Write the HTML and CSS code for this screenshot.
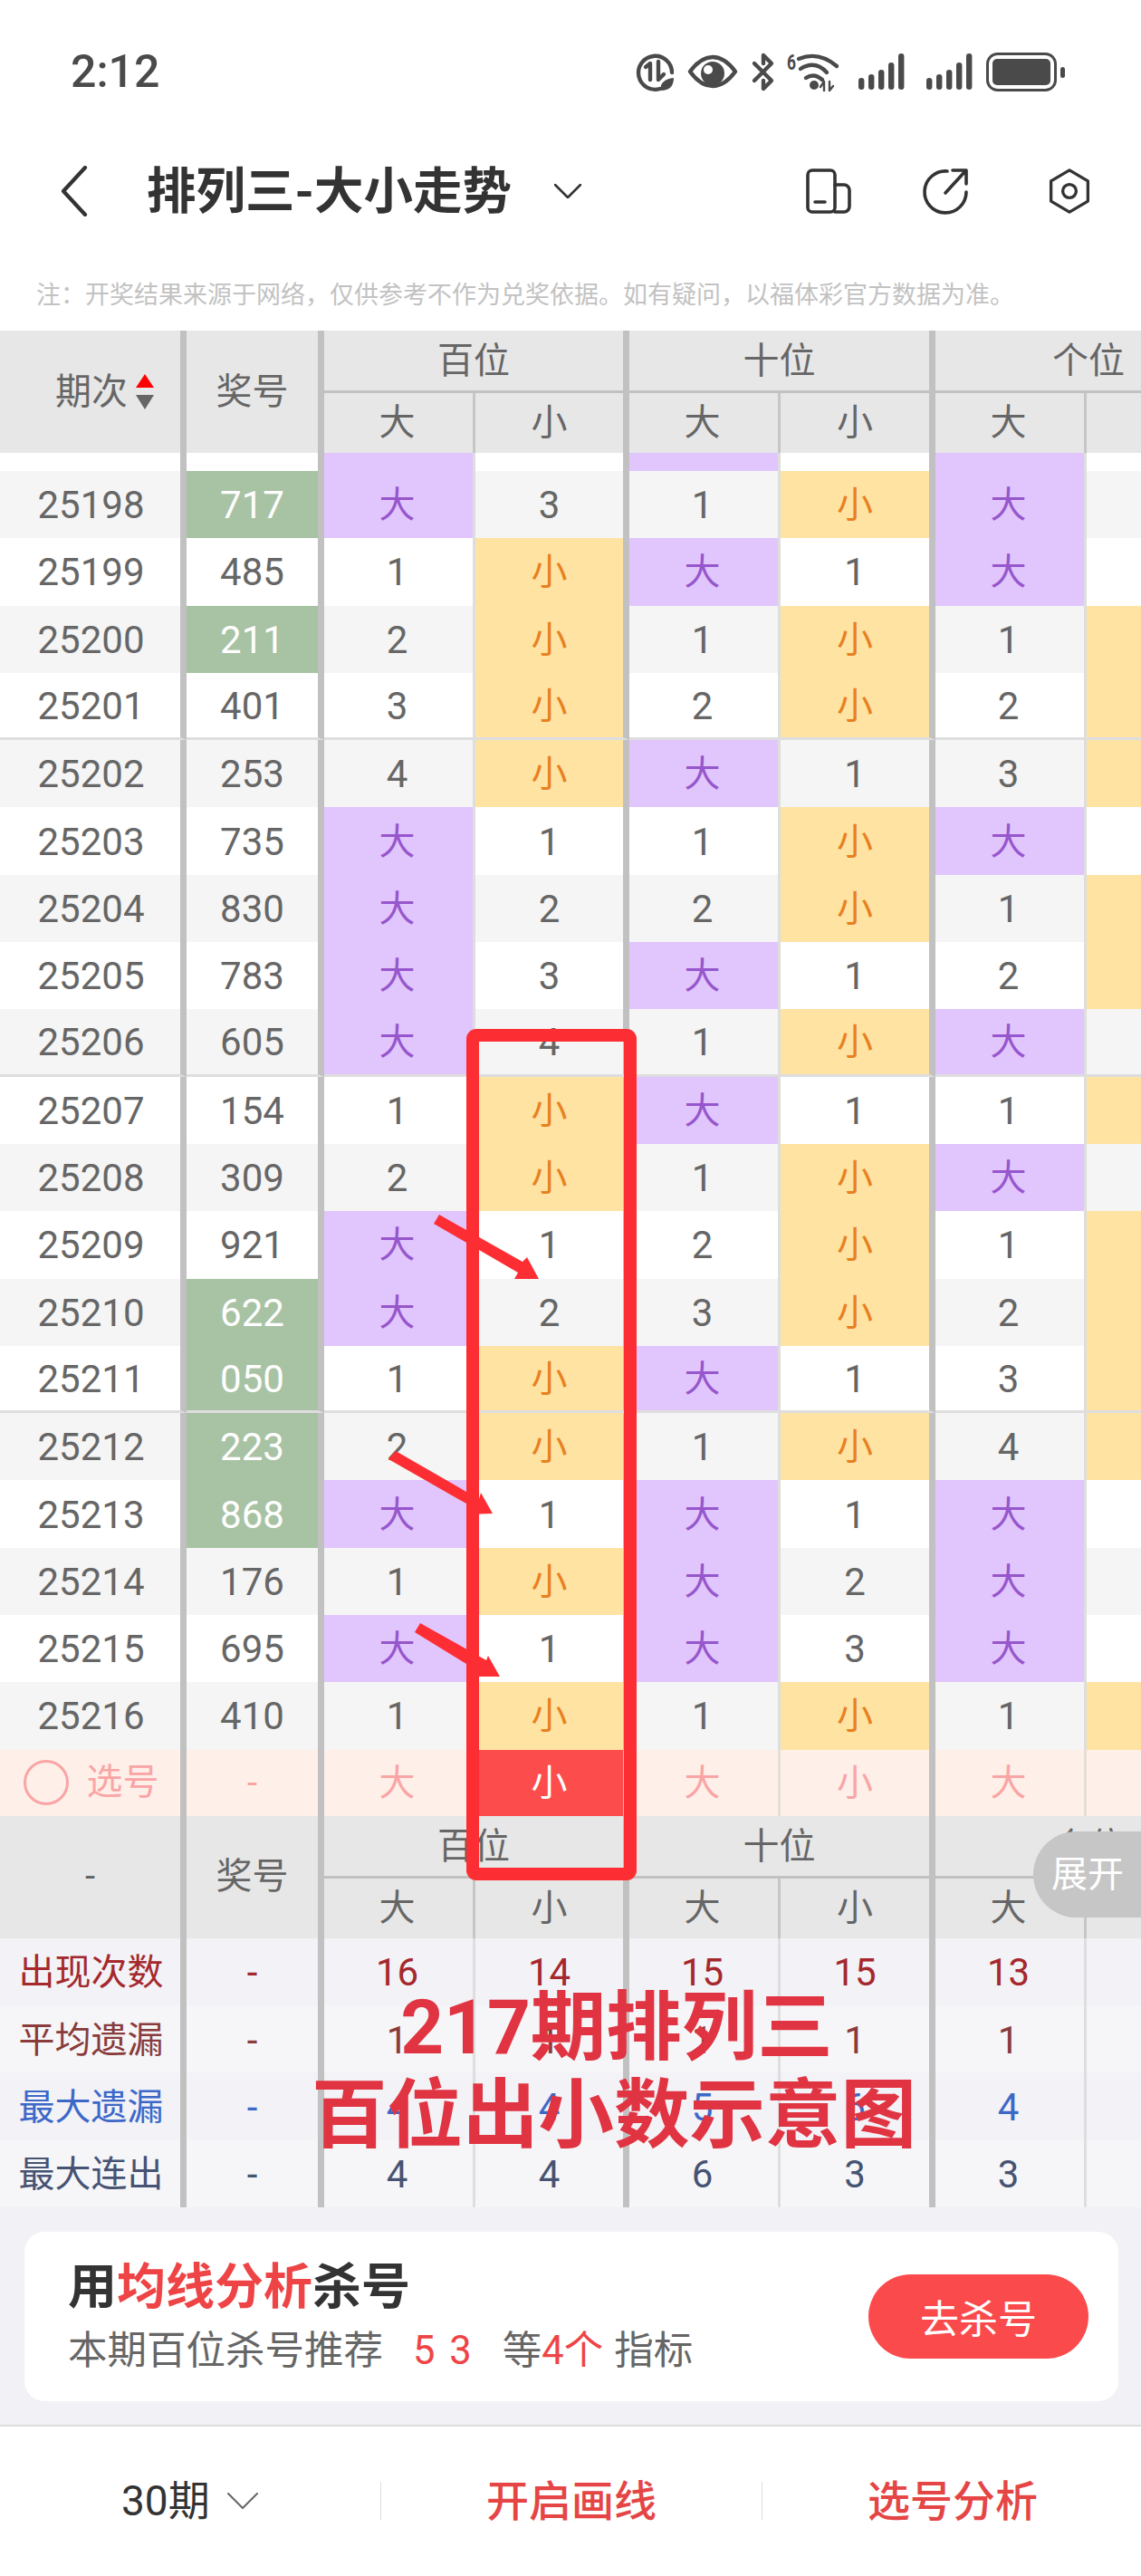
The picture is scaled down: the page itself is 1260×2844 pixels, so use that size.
FILE: index.html
```html
<!DOCTYPE html>
<html lang="zh">
<head>
<meta charset="utf-8">
<title>排列三-大小走势</title>
<link rel="stylesheet" href="styles.css">
</head>
<body>
<div class="page">
  <div class="status">
    <span class="time">2:12</span>
    <div class="status-icons">
      <svg class="i-data" viewBox="0 0 41 41"><path class="s4" d="M26 39A18.5 18.5 0 1 1 39 21"/><path class="s4" d="M10 15l5-4v18M24 9v20l6-6"/><path class="fill" d="M27 41c-2-8 4-13 14-14 0 9-5 14-14 14z"/></svg>
      <svg class="i-eye" viewBox="0 0 54 36"><path class="s4" d="M2 18C10 7 18 2 27 2s17 5 25 16c-8 11-16 16-25 16S10 29 2 18z"/><circle class="fill" cx="27" cy="20" r="13"/><circle class="hole" cx="22" cy="16" r="5"/></svg>
      <svg class="i-bt" viewBox="0 0 25 41"><path class="s4" d="M3 11l19 19-9 9v-9M13 11V2l9 9L3 30"/></svg>
      <svg class="i-wifi" viewBox="0 0 57 41"><text class="six" x="0" y="18" textLength="10" lengthAdjust="spacingAndGlyphs">6</text><path class="s4" d="M13 6Q35-3 55 14"/><path class="s4" d="M15 17Q31 7 44 21"/><path class="s4" d="M21 27Q30 21 39 29"/><circle class="fill" cx="30" cy="35" r="5"/><path class="s2" d="M41 41V31l-4 6M47 31v10l4-5"/></svg>
      <svg class="i-sig" viewBox="0 0 51 41"><rect class="fill" x="0" y="27" width="6.4" height="13" rx="3.2"/><rect class="fill" x="11" y="23" width="6.4" height="17" rx="3.2"/><rect class="fill" x="22" y="18" width="6.4" height="22" rx="3.2"/><rect class="fill" x="33" y="10" width="6.4" height="30" rx="3.2"/><rect class="fill" x="44" y="0" width="6.4" height="40" rx="3.2"/></svg>
      <svg class="i-sig2" viewBox="0 0 51 41"><rect class="fill" x="0" y="27" width="6.4" height="13" rx="3.2"/><rect class="fill" x="11" y="23" width="6.4" height="17" rx="3.2"/><rect class="fill" x="22" y="18" width="6.4" height="22" rx="3.2"/><rect class="fill" x="33" y="10" width="6.4" height="30" rx="3.2"/><rect class="fill" x="44" y="0" width="6.4" height="40" rx="3.2"/></svg>
      <svg class="i-bat" viewBox="0 0 87 43"><rect class="s3" x="1.5" y="1.5" width="75" height="40" rx="11"/><rect class="fill" x="7" y="7" width="64" height="29" rx="5"/><rect class="fill" x="82" y="16" width="5" height="12" rx="2.5"/></svg>
    </div>
  </div>

  <div class="nav">
    <svg class="back" viewBox="0 0 30 56"><path d="M27 2L3 28l24 26"/></svg>
    <h1 class="title">排列三-大小走势</h1>
    <svg class="caret" viewBox="0 0 30 16"><path d="M1 1l14 14L29 1"/></svg>
    <div class="nav-icons">
      <svg viewBox="0 0 50 50"><rect x="2" y="2" width="30" height="46" rx="5"/><path d="M32 18h10a6 6 0 0 1 6 6v18a6 6 0 0 1-6 6H32M10 37h11"/></svg>
      <svg viewBox="0 0 50 50"><path d="M27 3A23 23 0 1 0 48 26M25 27L47 3M33 2h15v15"/></svg>
      <svg viewBox="0 0 50 54"><path d="M25 2l22 13v24L25 52 3 39V15z"/><circle cx="25" cy="27" r="8"/></svg>
    </div>
  </div>

  <p class="note">注：开奖结果来源于网络，仅供参考不作为兑奖依据。如有疑问，以福体彩官方数据为准。</p>

  <div class="table">
    <div class="thead">
      <div class="h span2 thick sortable"><span>期次</span><span class="sort"><i class="up"></i><i class="down"></i></span></div>
      <div class="h span2 thick">奖号</div>
      <div class="h grp thick">百位</div>
      <div class="h grp thick">十位</div>
      <div class="h grp">个位</div>
      <div class="h thin">大</div><div class="h thick">小</div>
      <div class="h thin">大</div><div class="h thick">小</div>
      <div class="h thin">大</div><div class="h"></div>
    </div>

    <div class="row stub"><div class="c thick"></div><div class="c thick"></div><div class="c thin d"></div><div class="c thick"></div><div class="c thin d"></div><div class="c thick"></div><div class="c thin d"></div><div class="c"></div></div>

    <div class="row alt"><div class="c thick">25198</div><div class="c thick g">717</div><div class="c thin d">大</div><div class="c thick">3</div><div class="c thin">1</div><div class="c thick x">小</div><div class="c thin d">大</div><div class="c"></div></div>
    <div class="row"><div class="c thick">25199</div><div class="c thick">485</div><div class="c thin">1</div><div class="c thick x">小</div><div class="c thin d">大</div><div class="c thick">1</div><div class="c thin d">大</div><div class="c"></div></div>
    <div class="row alt"><div class="c thick">25200</div><div class="c thick g">211</div><div class="c thin">2</div><div class="c thick x">小</div><div class="c thin">1</div><div class="c thick x">小</div><div class="c thin">1</div><div class="c x"></div></div>
    <div class="row sep"><div class="c thick">25201</div><div class="c thick">401</div><div class="c thin">3</div><div class="c thick x">小</div><div class="c thin">2</div><div class="c thick x">小</div><div class="c thin">2</div><div class="c x"></div></div>
    <div class="row alt"><div class="c thick">25202</div><div class="c thick">253</div><div class="c thin">4</div><div class="c thick x">小</div><div class="c thin d">大</div><div class="c thick">1</div><div class="c thin">3</div><div class="c x"></div></div>
    <div class="row"><div class="c thick">25203</div><div class="c thick">735</div><div class="c thin d">大</div><div class="c thick">1</div><div class="c thin">1</div><div class="c thick x">小</div><div class="c thin d">大</div><div class="c"></div></div>
    <div class="row alt"><div class="c thick">25204</div><div class="c thick">830</div><div class="c thin d">大</div><div class="c thick">2</div><div class="c thin">2</div><div class="c thick x">小</div><div class="c thin">1</div><div class="c x"></div></div>
    <div class="row"><div class="c thick">25205</div><div class="c thick">783</div><div class="c thin d">大</div><div class="c thick">3</div><div class="c thin d">大</div><div class="c thick">1</div><div class="c thin">2</div><div class="c x"></div></div>
    <div class="row alt sep"><div class="c thick">25206</div><div class="c thick">605</div><div class="c thin d">大</div><div class="c thick">4</div><div class="c thin">1</div><div class="c thick x">小</div><div class="c thin d">大</div><div class="c"></div></div>
    <div class="row"><div class="c thick">25207</div><div class="c thick">154</div><div class="c thin">1</div><div class="c thick x">小</div><div class="c thin d">大</div><div class="c thick">1</div><div class="c thin">1</div><div class="c x"></div></div>
    <div class="row alt"><div class="c thick">25208</div><div class="c thick">309</div><div class="c thin">2</div><div class="c thick x">小</div><div class="c thin">1</div><div class="c thick x">小</div><div class="c thin d">大</div><div class="c"></div></div>
    <div class="row"><div class="c thick">25209</div><div class="c thick">921</div><div class="c thin d">大</div><div class="c thick">1</div><div class="c thin">2</div><div class="c thick x">小</div><div class="c thin">1</div><div class="c x"></div></div>
    <div class="row alt"><div class="c thick">25210</div><div class="c thick g">622</div><div class="c thin d">大</div><div class="c thick">2</div><div class="c thin">3</div><div class="c thick x">小</div><div class="c thin">2</div><div class="c x"></div></div>
    <div class="row sep"><div class="c thick">25211</div><div class="c thick g">050</div><div class="c thin">1</div><div class="c thick x">小</div><div class="c thin d">大</div><div class="c thick">1</div><div class="c thin">3</div><div class="c x"></div></div>
    <div class="row alt"><div class="c thick">25212</div><div class="c thick g">223</div><div class="c thin">2</div><div class="c thick x">小</div><div class="c thin">1</div><div class="c thick x">小</div><div class="c thin">4</div><div class="c x"></div></div>
    <div class="row"><div class="c thick">25213</div><div class="c thick g">868</div><div class="c thin d">大</div><div class="c thick">1</div><div class="c thin d">大</div><div class="c thick">1</div><div class="c thin d">大</div><div class="c"></div></div>
    <div class="row alt"><div class="c thick">25214</div><div class="c thick">176</div><div class="c thin">1</div><div class="c thick x">小</div><div class="c thin d">大</div><div class="c thick">2</div><div class="c thin d">大</div><div class="c"></div></div>
    <div class="row"><div class="c thick">25215</div><div class="c thick">695</div><div class="c thin d">大</div><div class="c thick">1</div><div class="c thin d">大</div><div class="c thick">3</div><div class="c thin d">大</div><div class="c"></div></div>
    <div class="row alt"><div class="c thick">25216</div><div class="c thick">410</div><div class="c thin">1</div><div class="c thick x">小</div><div class="c thin">1</div><div class="c thick x">小</div><div class="c thin">1</div><div class="c x"></div></div>

    <div class="row pick"><div class="c thick"><span class="circle"></span><span>选号</span></div><div class="c thick">-</div><div class="c thin">大</div><div class="c thick on">小</div><div class="c thin">大</div><div class="c thick">小</div><div class="c thin">大</div><div class="c"></div></div>

    <div class="thead">
      <div class="h span2 thick">-</div>
      <div class="h span2 thick">奖号</div>
      <div class="h grp thick">百位</div>
      <div class="h grp thick">十位</div>
      <div class="h grp">个位</div>
      <div class="h thin">大</div><div class="h thick">小</div>
      <div class="h thin">大</div><div class="h thick">小</div>
      <div class="h thin">大</div><div class="h"></div>
    </div>

    <div class="row stat s-red"><div class="c thick label">出现次数</div><div class="c thick">-</div><div class="c thin">16</div><div class="c thick">14</div><div class="c thin">15</div><div class="c thick">15</div><div class="c thin">13</div><div class="c"></div></div>
    <div class="row stat alt-stat s-brown"><div class="c thick label">平均遗漏</div><div class="c thick">-</div><div class="c thin">1</div><div class="c thick">1</div><div class="c thin">1</div><div class="c thick">1</div><div class="c thin">1</div><div class="c"></div></div>
    <div class="row stat s-blue"><div class="c thick label">最大遗漏</div><div class="c thick">-</div><div class="c thin">4</div><div class="c thick">4</div><div class="c thin">5</div><div class="c thick">6</div><div class="c thin">4</div><div class="c"></div></div>
    <div class="row stat alt-stat s-navy"><div class="c thick label">最大连出</div><div class="c thick">-</div><div class="c thin">4</div><div class="c thick">4</div><div class="c thin">6</div><div class="c thick">3</div><div class="c thin">3</div><div class="c"></div></div>
  </div>

  <div class="promo">
    <div class="card">
      <div class="card-text">
        <div class="card-title">用<em>均线分析</em>杀号</div>
        <div class="card-sub"><span>本期百位杀号推荐</span><em class="nums">5 3</em><span class="deng">等</span><em>4个</em><span class="zb">指标</span></div>
      </div>
      <button class="go">去杀号</button>
    </div>
  </div>

  <div class="bar">
    <div class="bar-item period">30期<svg class="bar-caret" viewBox="0 0 34 18"><path d="M1 1l16 16L33 1"/></svg></div>
    <div class="bar-item action">开启画线</div>
    <div class="bar-item action">选号分析</div>
  </div>

  <svg class="marks" viewBox="0 0 1260 2844">
    <rect class="box" x="522" y="1143" width="174" height="926" rx="4"/>
    <path class="arrow" d="M479 1351L485 1341L577 1393L582 1388L595 1412L568 1412L572 1405Z"/>
    <path class="arrow" d="M429 1611L437 1602L529 1655L531 1648L544 1671L515 1672L515 1660Z"/>
    <path class="arrow" d="M458 1802L464 1792L537 1833L539 1828L552 1851L515 1851L515 1837Z"/>
  </svg>
  <div class="caption"><span class="cap-first">217期排列三</span><br>百位出小数示意图</div>
  <div class="expand">展开</div>
</div>
</body>
</html>
```

FILE: styles.css
```css
* { box-sizing: border-box; }
html, body { margin: 0; padding: 0; background: #fff; }
body { font-family: Roboto, "Noto Sans CJK SC", sans-serif; }
em { font-style: normal; }
.page { position: relative; width: 1260px; height: 2844px; overflow: hidden; }

/* status bar */
.status { height: 158px; display: flex; align-items: center; justify-content: space-between; padding: 0 84px 0 78px; }
.time { font-size: 50px; font-weight: 500; color: #4a4a4a; line-height: 1; }
.status-icons { display: flex; align-items: center; }
.status-icons svg { display: block; height: 41px; flex: none; overflow: visible; }
.i-data { width: 41px; }
.i-eye { width: 54px; height: 36px !important; margin-left: 16px; }
.i-bt { width: 25px; margin-left: 16px; }
.i-wifi { width: 57px; margin-left: 14px; }
.i-sig { width: 51px; margin-left: 22px; }
.i-sig2 { width: 51px; margin-left: 24px; }
.i-bat { width: 87px; height: 43px !important; margin-left: 15px; }
.s4, .s3, .s2 { fill: none; stroke: #4a4a4a; stroke-linecap: round; stroke-linejoin: round; }
.s4 { stroke-width: 4.4; }
.s3 { stroke-width: 3; }
.s2 { stroke-width: 2.4; }
.fill { fill: #4a4a4a; }
.hole { fill: #fff; }
.six { font-family: Roboto; font-size: 24px; font-weight: 700; fill: #4a4a4a; }

/* nav */
.nav { height: 106px; display: flex; align-items: center; padding-left: 67px; }
.back { width: 30px; height: 56px; flex: none; }
.back path, .caret path, .bar-caret path { fill: none; stroke: #333; stroke-linecap: round; stroke-linejoin: round; }
.back path { stroke-width: 4.2; }
.title { margin: 0 0 0 65px; font-size: 54.5px; font-weight: 700; color: #333; line-height: 1; white-space: nowrap; }
.caret { width: 30px; height: 16px; margin-left: 47px; flex: none; }
.caret path { stroke-width: 2.6; }
.nav-icons { display: flex; align-items: center; gap: 79px; margin-left: auto; padding-right: 54px; }
.nav-icons svg { width: 50px; height: 50px; display: block; flex: none; overflow: visible; }
.nav-icons svg:last-child { margin-left: 8px; }
.nav-icons path, .nav-icons rect, .nav-icons circle { fill: none; stroke: #333; stroke-width: 3.6; stroke-linecap: round; stroke-linejoin: round; }

/* note */
.note { margin: 0; height: 101px; padding: 44px 0 0 40px; font-size: 27px; line-height: 36px; color: #c2c2c2; white-space: nowrap; }

/* table */
.table { width: 1371px; color: #666; font-size: 40px; }
.thead, .row { display: grid; grid-template-columns: 206px 152px 167px 170px 167px 171px 167px 171px; }
.thead { grid-template-rows: 69px 66px; background: #e7e7e7; }
.h { display: flex; align-items: center; justify-content: center; color: #666; line-height: 1; }
.h.span2 { grid-row: span 2; }
.grp { grid-column: span 2; border-bottom: 3px solid #c1c1c1; padding-top: 2px; }
.thick { border-right: 7px solid #c1c1c1; }
.thin { border-right: 3px solid #dedede; padding-right: 3px; }
.thead .thin { border-right-color: #c6c6c6; }
.sortable { padding-left: 32px; }
.sort { display: flex; flex-direction: column; gap: 8px; margin-left: 9px; }
.sort i { display: block; width: 0; height: 0; border-left: 10px solid transparent; border-right: 10px solid transparent; }
.up { border-bottom: 15px solid #f00; }
.down { border-top: 16px solid #666; }

.row { height: 74.3px; background: #fff; }
.row.alt { background: #f5f5f5; }
.stub { height: 20px; }
.c { display: flex; align-items: center; justify-content: center; font-size: 42px; line-height: 1; min-width: 0; padding-top: 2px; }
.c:first-child { padding-left: 2px; }
.stat .c { padding-top: 3px; }
.d, .x, .pick .c, .on { font-size: 40px; }
.d { background: #e1c5fd; color: #9656cc; }
.x { background: #fee3a3; color: #e8801f; }
.g { background: #a8c2a4; color: #fff; }
.sep .c { border-bottom: 3px solid #dedede; }

.row.pick { height: 73px; background: #ffefe9; color: #f9a5a5; }
.pick .thin { border-right-color: #e6dcd8; }
.pick .c.on { background: #fd4c4c; color: #fff; }
.pick .c:first-child { padding-top: 0; }
.circle { width: 50px; height: 50px; border: 3px solid #f9a5a5; border-radius: 50%; margin-right: 20px; }

.row.stat { height: 74.25px; background: #f2f2f7; }
.row.stat.alt-stat { background: #f6f6f8; }
.label { font-size: 40px; }
.s-red { color: #a5282d; }
.s-brown { color: #8a3b3b; }
.s-blue { color: #3d68c8; }
.s-navy { color: #465373; }

/* promo */
.promo { height: 242px; padding: 27px 25px 0 27px; background: #f2f2f6; border-bottom: 2px solid #ddd; }
.card { height: 187px; background: #fff; border-radius: 22px; display: flex; align-items: center; justify-content: space-between; padding: 0 33px 0 48px; }
.card-text { padding-top: 3px; }
.card-title { font-size: 54px; font-weight: 700; color: #333; line-height: 64px; }
.card-title em { color: #ee4446; }
.card-sub { display: flex; align-items: center; font-size: 43.5px; color: #666; line-height: 56px; margin-top: 10px; }
.card-sub em { color: #ee4446; }
.nums { margin-left: 33px; word-spacing: 5px; }
.deng { margin-left: 34px; }
.zb { margin-left: 12px; }
.go { width: 243px; height: 93px; border: 0; border-radius: 46.5px; background: #fb4a4c; color: #fff; font: inherit; font-size: 43px; padding: 0; }

/* bottom bar */
.bar { height: 165px; display: grid; grid-template-columns: 421px 421px 418px; align-items: center; background: #fff; }
.bar-item { display: flex; align-items: center; justify-content: center; height: 42px; font-size: 47px; line-height: 1; }
.period { color: #333; font-size: 46px; justify-content: flex-start; padding-left: 134px; border-right: 1px solid #ddd; }
.action { color: #e54545; font-weight: 500; }
.action:nth-child(2) { border-right: 1px solid #ddd; }
.action:nth-child(3) { padding-left: 2px; }
.bar-caret { width: 34px; height: 18px; margin-left: 19px; flex: none; }
.bar-caret path { stroke: #666; stroke-width: 2; }

/* overlays */
.marks { position: absolute; left: 0; top: 0; width: 1260px; height: 2844px; pointer-events: none; }
.box { fill: none; stroke: #fd2e33; stroke-width: 14; }
.arrow { fill: #fd2e33; }
.caption { position: absolute; left: 344px; top: 2190px; width: 664px; text-align: center; font-size: 83.5px; line-height: 97px; font-weight: 700; color: #e13442; white-space: nowrap; }
.cap-first { margin-left: 10px; }
.expand { position: absolute; right: 0; top: 2022px; width: 119px; height: 95px; padding-left: 20px; display: flex; align-items: center; background: #c6c6c6; border-radius: 47.5px 0 0 47.5px; color: #fff; font-size: 40px; line-height: 1; }
```
